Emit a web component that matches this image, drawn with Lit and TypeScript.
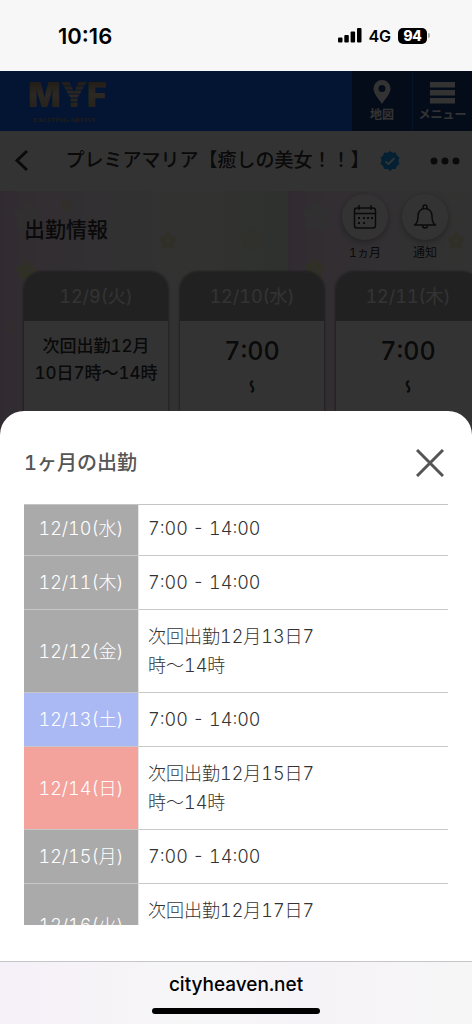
import { LitElement, html, css, svg, nothing } from "lit";
import { customElement, state } from "lit/decorators.js";

interface Shift {
  date: string;
  kind: "weekday" | "sat" | "sun";
  text: string;
}

interface DayCard {
  date: string;
  note?: string;
  start?: string;
}

const SHIFTS: Shift[] = [
  { date: "12/10(水)", kind: "weekday", text: "7:00 - 14:00" },
  { date: "12/11(木)", kind: "weekday", text: "7:00 - 14:00" },
  { date: "12/12(金)", kind: "weekday", text: "次回出勤12月13日7時〜14時" },
  { date: "12/13(土)", kind: "sat", text: "7:00 - 14:00" },
  { date: "12/14(日)", kind: "sun", text: "次回出勤12月15日7時〜14時" },
  { date: "12/15(月)", kind: "weekday", text: "7:00 - 14:00" },
  { date: "12/16(火)", kind: "weekday", text: "次回出勤12月17日7時〜14時" },
];

const CARDS: DayCard[] = [
  { date: "12/9(火)", note: "次回出勤12月10日7時〜14時" },
  { date: "12/10(水)", start: "7:00" },
  { date: "12/11(木)", start: "7:00" },
];

const petals = (x: number, y: number, r: number, fill: string) => svg`
  <g fill=${fill} transform="translate(${x} ${y})">
    ${[0, 72, 144, 216, 288].map(
      (a) => svg`<ellipse cx="0" cy=${-r * 0.6} rx=${r * 0.42} ry=${r * 0.5} transform="rotate(${a})"></ellipse>`
    )}
  </g>`;

@customElement("app-root")
export class AppRoot extends LitElement {
  @state() private open = true;

  static styles = css`
    :host {
      display: flex;
      flex-direction: column;
      height: 100vh;
      overflow: hidden;
      color: #333;
      background: #fff;
      font-family: Inter, "Noto Sans CJK JP", sans-serif;
      font-variant-numeric: tabular-nums;
    }
    * {
      box-sizing: border-box;
    }
    svg {
      display: block;
    }
    button {
      border: 0;
      padding: 0;
      background: none;
      color: inherit;
      font: inherit;
      cursor: pointer;
    }
    h1,
    h2,
    p {
      margin: 0;
    }

    .status {
      flex: none;
      height: 71px;
      padding: 0 42px 0 58px;
      display: flex;
      align-items: center;
      justify-content: space-between;
      background: #f7f7f7;
      color: #000;
    }
    .clock {
      font-size: 22px;
      font-weight: 600;
      font-variant-numeric: normal;
    }
    .signals {
      display: flex;
      align-items: center;
      gap: 7px;
      font-size: 16px;
      font-weight: 600;
    }
    .battery {
      display: flex;
      align-items: center;
      gap: 1px;
    }
    .level {
      width: 29px;
      height: 16px;
      border-radius: 5px;
      background: #000;
      color: #fff;
      font-size: 14px;
      line-height: 16px;
      font-weight: 800;
      text-align: center;
    }
    .nub {
      width: 2px;
      height: 5px;
      border-radius: 0 2px 2px 0;
      background: #aaa;
    }

    .viewport {
      flex: 1;
      min-height: 0;
      position: relative;
      overflow: hidden;
    }
    .site {
      display: flex;
      height: 60px;
      background: #1464ff;
    }
    .logo {
      flex: 1;
      padding-left: 28px;
    }
    .site-btn {
      width: 60px;
      display: flex;
      flex-direction: column;
      align-items: center;
      justify-content: flex-end;
      gap: 3px;
      padding-bottom: 8px;
      background: #143c82;
      color: #fff;
      font-size: 12px;
      line-height: 16px;
      font-weight: 700;
      white-space: nowrap;
    }
    .site-btn + .site-btn {
      border-left: 1px solid #1464c8;
    }

    .profile {
      display: flex;
      align-items: center;
      height: 60px;
      padding: 0 12px;
      background: #fff;
    }
    .profile h1 {
      flex: 1;
      display: flex;
      align-items: center;
      justify-content: center;
      gap: 10px;
      padding-left: 5px;
      font-size: 19px;
      line-height: 28px;
      font-weight: 500;
      white-space: nowrap;
    }

    .schedule {
      height: 800px;
      position: relative;
      background: linear-gradient(90deg, #f4d8f4 0, #f8e4f6 40px, #f8f4f8 120px, #fafaf6 200px, #e6f5e4 288px);
      background-size: 288px 100%;
    }
    .flowers {
      position: absolute;
      inset: 0;
    }
    .bar {
      position: relative;
      height: 81px;
      padding: 3px 24px 0;
      display: flex;
      justify-content: space-between;
    }
    .bar h2 {
      padding-top: 20px;
      font-size: 21px;
      line-height: 32px;
      font-weight: 500;
    }
    .tools {
      display: flex;
      gap: 14px;
    }
    .tool {
      width: 46px;
      display: flex;
      flex-direction: column;
      align-items: center;
      gap: 5px;
      font-size: 12px;
      line-height: 16px;
      font-weight: 400;
      white-space: nowrap;
    }
    .disc {
      width: 46px;
      height: 46px;
      display: grid;
      place-items: center;
      border-radius: 50%;
      background: #fff;
      box-shadow: 0 2px 6px rgba(0, 0, 0, 0.3);
    }
    .cards {
      position: relative;
      display: flex;
      gap: 12px;
      padding-left: 24px;
    }
    .card {
      flex: none;
      width: 144px;
      height: 260px;
      border-radius: 18px;
      overflow: hidden;
      background: #fff;
      box-shadow: 0 0 3px rgba(0, 0, 0, 0.7);
      text-align: center;
    }
    .card-date {
      background: #a5a5a5;
      color: #fff;
      font-size: 18px;
      line-height: 49px;
      font-weight: 400;
    }
    .note {
      padding: 12px 8px;
      font-size: 17px;
      line-height: 27px;
      font-weight: 500;
    }
    .start {
      padding-top: 12px;
      font-size: 25px;
      line-height: 36px;
      font-weight: 500;
    }
    .until {
      margin: 10px auto 0;
      writing-mode: vertical-rl;
      font-size: 14px;
      line-height: 20px;
      font-weight: 900;
      font-family: "Noto Sans CJK JP", sans-serif;
    }

    .shade {
      position: absolute;
      inset: 0;
      background: rgba(0, 0, 0, 0.8);
    }
    .sheet {
      position: absolute;
      inset: 340px 0 0;
      display: flex;
      flex-direction: column;
      padding: 0 24px 36px;
      border-radius: 24px 24px 0 0;
      background: #fff;
    }
    .sheet-head {
      flex: none;
      height: 93px;
      padding-top: 10px;
      display: flex;
      align-items: center;
      justify-content: space-between;
      color: #555;
    }
    .sheet-head h2 {
      font-size: 20px;
      line-height: 28px;
      font-weight: 500;
    }
    .close {
      padding: 4px;
    }
    .list {
      flex: 1;
      min-height: 0;
      overflow: hidden;
      border-top: 1px solid #c4c4c4;
    }
    table {
      width: 100%;
      margin-top: -3px;
      table-layout: fixed;
      border-spacing: 0;
      font-size: 18px;
      line-height: 29px;
    }
    th,
    td {
      padding: 12px 9px;
      border-bottom: 1px solid #c8c8c8;
      font-weight: 300;
      text-align: left;
    }
    th {
      width: 115px;
      padding: 12px 0;
      border-right: 1px solid #e4e4e4;
      color: #fff;
      text-align: center;
    }
    .weekday {
      background: #aaa;
    }
    .sat {
      background: #aab9f4;
    }
    .sun {
      background: #f4a39c;
    }
    .hours {
      max-width: 180px;
    }

    .browser {
      flex: none;
      height: 63px;
      border-top: 1px solid #c6c6ca;
      background: linear-gradient(90deg, #f6f0f8, #f6f6f7 40%, #f6f3f8 65%, #f6f6f6);
      color: #000;
      display: flex;
      flex-direction: column;
      align-items: center;
      justify-content: space-between;
      padding: 11px 0 10px;
    }
    .address {
      font-size: 19px;
      line-height: 24px;
      font-weight: 500;
      color: inherit;
      text-decoration: none;
    }
    .home {
      width: 168px;
      height: 6px;
      border-radius: 3px;
      background: #000;
    }
  `;

  private renderLogo() {
    return html`<svg width="90" height="58" viewBox="0 0 90 58" role="img" aria-label="MYF EXCITING ARTIST">
      <defs>
        <linearGradient id="metal" x1="0" y1="0" x2="0" y2="1">
          <stop offset="0" stop-color="#8c7850"></stop>
          <stop offset="0.5" stop-color="#dcc8aa"></stop>
          <stop offset="1" stop-color="#b4a078"></stop>
        </linearGradient>
      </defs>
      <text x="0" y="36" font-family="Inter" font-weight="900" font-size="34" fill="url(#metal)">MYF</text>
      <g stroke="#1464ff" stroke-width="1">
        <path d="M33 15H57M33 19H56M34 23H54M36 27H53M36 31H52"></path>
      </g>
      <text x="5" y="51" font-family="Liberation Serif" font-weight="700" font-size="7" fill="#aa9664">EXCITING ARTIST</text>
    </svg>`;
  }

  private renderPage() {
    return html`
      <header class="site">
        <div class="logo">${this.renderLogo()}</div>
        <button class="site-btn">
          <svg width="18" height="24" viewBox="0 0 18 24" aria-hidden="true">
            <path
              fill="#fff"
              fill-rule="evenodd"
              d="M9 0a8.5 8.5 0 0 1 8.5 8.5C17.500 14 12 19 9 24 6 19 .5 14 .5 8.500A8.500 8.500 0 0 1 9 0Zm0 5a3.500 3.500 0 1 0 0 7 3.500 3.500 0 0 0 0-7Z"
            ></path>
          </svg>
          地図
        </button>
        <button class="site-btn">
          <svg width="25" height="22" viewBox="0 0 25 22" aria-hidden="true">
            <path fill="#fff" d="M0 0h25v5.500H0zM0 8h25v5.500H0zM0 16h25v5.500H0z"></path>
          </svg>
          メニュー
        </button>
      </header>

      <div class="profile">
        <button aria-label="戻る">
          <svg width="18" height="24" viewBox="0 0 18 24" fill="none" stroke="#333" stroke-width="3">
            <path d="M15 2 5 11.500 15 21"></path>
          </svg>
        </button>
        <h1>
          プレミアマリア【癒しの美女！！】
          <svg width="20" height="20" viewBox="0 0 20 20" aria-hidden="true">
            <path
              fill="#14a0ff"
              d="M10 0l2.600 1.800 3.200-.2 1.100 3 2.500 2-.9 3.200.9 3.200-2.500 2-1.100 3-3.200-.1L10 20l-2.600-2-3.200.1-1.100-3-2.500-2L1.500 9.800.6 6.600l2.500-2 1.100-3 3.200.2z"
            ></path>
            <path d="M5.500 10.500l3 2.500 6-6" fill="none" stroke="#fff" stroke-width="1.800"></path>
          </svg>
        </h1>
        <button aria-label="その他">
          <svg width="30" height="8" viewBox="0 0 30 8" fill="#333">
            <circle cx="4" cy="4" r="3.500"></circle>
            <circle cx="15" cy="4" r="3.500"></circle>
            <circle cx="26" cy="4" r="3.500"></circle>
          </svg>
        </button>
      </div>

      <section class="schedule">
        <svg class="flowers" width="472" height="240" viewBox="0 0 472 240" aria-hidden="true">
          ${petals(28, 26, 13, "#f4ecec")} ${petals(66, 14, 6, "#f8e8d8")} ${petals(168, 50, 8, "#f0f0c8")}
          ${petals(26, 80, 9, "#f0f0c0")} ${petals(317, 26, 13, "#f4f0f4")} ${petals(315, 78, 9, "#f0f0c0")}
          ${petals(252, 48, 12, "#f0f3da")} ${petals(456, 50, 8, "#f0f0c8")} ${petals(12, 136, 6, "#f8dcec")}
        </svg>
        <div class="bar">
          <h2>出勤情報</h2>
          <div class="tools">
            <button class="tool">
              <span class="disc">
                <svg width="24" height="24" viewBox="0 0 24 24" fill="none" stroke="#333" stroke-width="1.500">
                  <rect x="1.500" y="3" width="21" height="20" rx="2.500"></rect>
                  <path d="M1.500 8.500h21M6 0v5M18 0v5"></path>
                  <path d="M10 13h2M14 13h2M18 13h2M5 13h2M5 18h2M10 18h2" stroke-width="2"></path>
                </svg>
              </span>
              1ヵ月
            </button>
            <button class="tool">
              <span class="disc">
                <svg width="24" height="26" viewBox="0 0 24 26" fill="none" stroke="#333" stroke-width="1.500">
                  <path d="M1.500 21c3-1.500 3.500-4 3.500-9 0-4.500 3-7.500 7-7.500s7 3 7 7.500c0 5 .5 7.500 3.500 9z" stroke-linejoin="round"></path>
                  <path d="M10 4.500V3a2 2 0 0 1 4 0v1.500M9.500 21.500a2.500 2.500 0 0 0 5 0"></path>
                </svg>
              </span>
              通知
            </button>
          </div>
        </div>
        <div class="cards">
          ${CARDS.map(
            (c) => html`<article class="card">
              <div class="card-date">${c.date}</div>
              ${c.note ? html`<p class="note">${c.note}</p>` : nothing}
              ${c.start ? html`<p class="start">${c.start}</p><p class="until">〜</p>` : nothing}
            </article>`
          )}
        </div>
      </section>
    `;
  }

  private renderSheet() {
    return html`
      <div class="shade"></div>
      <section class="sheet" role="dialog" aria-labelledby="sheet-title">
        <div class="sheet-head">
          <h2 id="sheet-title">1ヶ月の出勤</h2>
          <button class="close" aria-label="閉じる" @click=${() => (this.open = false)}>
            <svg width="28" height="28" viewBox="0 0 28 28" fill="none" stroke="#555" stroke-width="3">
              <path d="M1 1l26 26M27 1 1 27"></path>
            </svg>
          </button>
        </div>
        <div class="list">
          <table>
            <tbody>
              ${SHIFTS.map(
                (s) => html`<tr>
                  <th scope="row" class=${s.kind}>${s.date}</th>
                  <td><div class="hours">${s.text}</div></td>
                </tr>`
              )}
            </tbody>
          </table>
        </div>
      </section>
    `;
  }

  render() {
    return html`
      <div class="status">
        <span class="clock">10:16</span>
        <div class="signals">
          <svg width="24" height="15" viewBox="0 0 24 15" aria-hidden="true">
            <rect x="0" y="9.500" width="4.500" height="5" rx="1"></rect>
            <rect x="6.300" y="7" width="4.500" height="7.500" rx="1"></rect>
            <rect x="12.600" y="3.500" width="4.500" height="11" rx="1"></rect>
            <rect x="19" y="0" width="4.500" height="14.500" rx="1"></rect>
          </svg>
          <span>4G</span>
          <div class="battery"><span class="level">94</span><span class="nub"></span></div>
        </div>
      </div>
      <main class="viewport">${this.renderPage()} ${this.open ? this.renderSheet() : nothing}</main>
      <footer class="browser">
        <a class="address" href="#">cityheaven.net</a>
        <div class="home"></div>
      </footer>
    `;
  }
}
